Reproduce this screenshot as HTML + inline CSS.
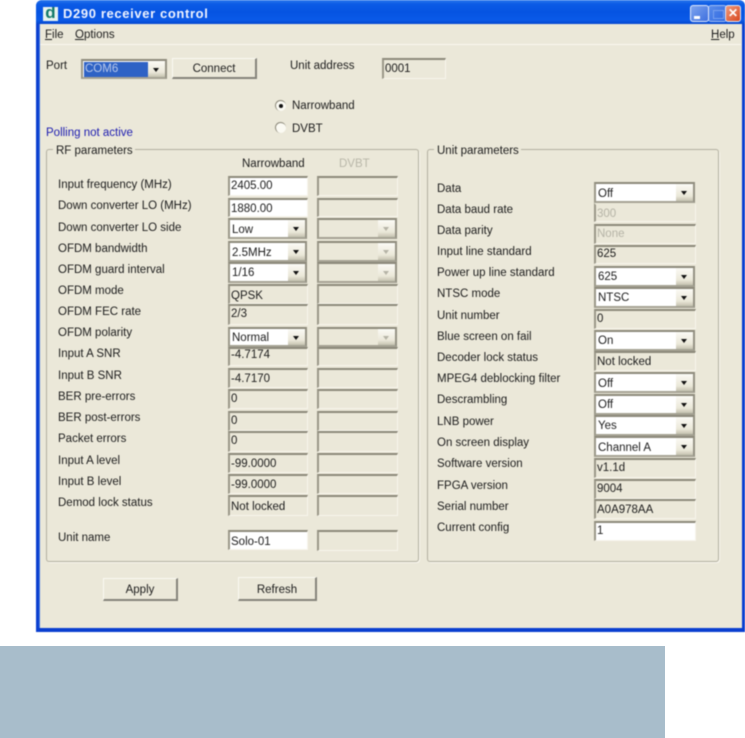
<!DOCTYPE html>
<html><head><meta charset="utf-8"><style>
html,body{margin:0;padding:0;background:#fff;width:745px;height:738px;overflow:hidden}
body{font-family:"Liberation Sans",sans-serif;font-size:11.5px;color:#1c1c1c;position:relative}
#w{position:absolute;left:36px;top:0;width:709px;height:632px;filter:blur(.45px)}
#a{position:absolute;left:0;top:0;width:709px;height:632px;background:#0a3fd0;border-radius:6px 6px 0 0}
#b{position:absolute;left:3px;top:24px;width:702px;height:604px;background:#ebe8d9;border-left:1px solid #3f73e0}
#t{position:absolute;left:0;top:0;width:709px;height:24px;border-radius:6px 6px 0 0;background:linear-gradient(#2a78ec 0,#0c5be6 4px,#0654e2 12px,#0a5ae8 20px,#0546cf 24px)}
.x{position:absolute;white-space:nowrap;line-height:14px;margin-left:-36px;margin-top:1px}
.f,.w,.c,.d{position:absolute;margin-left:-36px;box-sizing:border-box;border-top:2px solid #8c897a;border-left:2px solid #9a9788;border-bottom:1px solid #f7f5ec;border-right:1px solid #f7f5ec;background:#ebe8d9;padding-left:1px;padding-top:1px;line-height:17px;white-space:nowrap;overflow:hidden}
.w,.c{background:#fff}
.c,.d{border-bottom:2px solid #a5a294;border-right:2px solid #949183;padding-left:2px}
.c i,.d i{position:absolute;right:0;top:0;bottom:0;width:17px;background:linear-gradient(#fbfaf5,#ebe8d9 70%,#c5c2b0);}
.c i:after,.d i:after{content:"";position:absolute;left:5px;top:7px;border:3.5px solid transparent;border-top:4px solid #111;border-bottom:0}
.d i:after{border-top-color:#b5b3a6}
.g{position:absolute;margin-left:-36px;box-sizing:border-box;border:1px solid #b2afa0;box-shadow:1px 1px 0 #f8f6ee;border-radius:3px}
.lg{position:absolute;margin-left:-36px;margin-top:1px;background:#ebe8d9;padding:0 2px 0 3px;line-height:14px;white-space:nowrap}
.b{position:absolute;margin-left:-36px;box-sizing:border-box;background:#ebe8d9;border-top:1px solid #fbfaf3;border-left:1px solid #fbfaf3;border-right:2px solid #85837a;border-bottom:2px solid #85837a;text-align:center;line-height:21px}
.m{position:absolute;top:4px;width:19px;height:17px;border-radius:3px;border:1px solid #dfe8fa;box-sizing:border-box;background:linear-gradient(135deg,#7ea4ee,#3f70df)}
.r{position:absolute;margin-left:-36px;width:11px;height:11px;border-radius:50%;background:#fbfaf3;border-top:1px solid #8c897a;border-left:1px solid #8c897a;box-sizing:border-box}
.r b{position:absolute;left:3px;top:3px;width:4px;height:4px;border-radius:50%;background:#111}
u{text-decoration:underline}
</style></head><body>
<div id="w">
<div id="a"></div><div id="b"></div>
<div id="t"></div>
<div style="position:absolute;left:7px;top:7px;width:15px;height:14px;background:#e8f2ee;color:#137a6a;font:bold 17px/12px 'Liberation Sans',sans-serif;text-align:center;overflow:hidden">d</div>
<div style="position:absolute;left:27px;top:6px;color:#f0f4ff;font:bold 13px/16px 'Liberation Sans',sans-serif;letter-spacing:.63px;white-space:nowrap">D290 receiver control</div>
<div class="m" style="left:654px;top:5px"><div style="position:absolute;left:3px;bottom:2px;width:6px;height:3px;background:#fff"></div></div>
<div class="m" style="left:672px;top:5px;opacity:.7"><div style="position:absolute;left:4px;top:4px;width:9px;height:7px;border:1px solid #a9c2f4"></div></div>
<div class="m" style="left:689px;top:5px;width:16px;background:linear-gradient(135deg,#ee9a7c,#d9481e);text-align:center;color:#fff;font:bold 12px/15px 'Liberation Sans',sans-serif">✕</div>
<div style="position:absolute;left:4px;top:44px;width:701px;height:1px;background:#faf8f0"></div>

<div class="x" style="left:45px;top:27px"><u>F</u>ile</div>
<div class="x" style="left:75px;top:27px"><u>O</u>ptions</div>
<div class="x" style="left:711px;top:27px"><u>H</u>elp</div>

<div class="x" style="left:46px;top:58px">Port</div>
<div class="c" style="left:81px;top:59px;width:86px;height:20px;line-height:15px;padding:0"><span style="display:block;margin:1px 0 0 1px;width:65px;height:15px;background:#2e62c5;color:#b8c8ea;padding-left:1px">COM6</span><i></i></div>
<div class="b" style="left:172px;top:58px;width:85px;height:21px">Connect</div>
<div class="x" style="left:290px;top:58px">Unit address</div>
<div class="f" style="left:382px;top:58px;width:64px;height:21px">0001</div>

<div class="r" style="left:275px;top:100px"><b></b></div>
<div class="x" style="left:292px;top:98px">Narrowband</div>
<div class="r" style="left:275px;top:122px"></div>
<div class="x" style="left:292px;top:121px">DVBT</div>
<div class="x" style="left:46px;top:125px;color:#1c1cb0">Polling not active</div>

<div class="g" style="left:46px;top:149px;width:373px;height:413px"></div>
<div class="lg" style="left:53px;top:143px">RF parameters</div>
<div class="g" style="left:427px;top:149px;width:292px;height:413px"></div>
<div class="lg" style="left:434px;top:143px">Unit parameters</div>

<div class="x" style="left:242px;top:156px">Narrowband</div>
<div class="x" style="left:339px;top:156px;color:#b9b7a9">DVBT</div>

<div class="x" style="left:58px;top:177px">Input frequency (MHz)</div>
<div class="x" style="left:58px;top:198px">Down converter LO (MHz)</div>
<div class="x" style="left:58px;top:220px">Down converter LO side</div>
<div class="x" style="left:58px;top:241px">OFDM bandwidth</div>
<div class="x" style="left:58px;top:262px">OFDM guard interval</div>
<div class="x" style="left:58px;top:283px">OFDM mode</div>
<div class="x" style="left:58px;top:304px">OFDM FEC rate</div>
<div class="x" style="left:58px;top:325px">OFDM polarity</div>
<div class="x" style="left:58px;top:346px">Input A SNR</div>
<div class="x" style="left:58px;top:368px">Input B SNR</div>
<div class="x" style="left:58px;top:389px">BER pre-errors</div>
<div class="x" style="left:58px;top:410px">BER post-errors</div>
<div class="x" style="left:58px;top:431px">Packet errors</div>
<div class="x" style="left:58px;top:453px">Input A level</div>
<div class="x" style="left:58px;top:474px">Input B level</div>
<div class="x" style="left:58px;top:495px">Demod lock status</div>
<div class="x" style="left:58px;top:530px">Unit name</div>

<div class="w" style="left:228px;top:176px;width:80px;height:20px;line-height:15px">2405.00</div>
<div class="w" style="left:228px;top:198px;width:80px;height:19px">1880.00</div>
<div class="c" style="left:228px;top:218px;width:79px;height:21px;line-height:19px">Low<i></i></div>
<div class="c" style="left:228px;top:241px;width:79px;height:21px;line-height:19px">2.5MHz<i></i></div>
<div class="c" style="left:228px;top:262px;width:79px;height:21px">1/16<i></i></div>
<div class="f" style="left:228px;top:284px;width:80px;height:20px;line-height:19px">QPSK</div>
<div class="f" style="left:228px;top:304px;width:80px;height:21px;line-height:15px">2/3</div>
<div class="c" style="left:228px;top:327px;width:79px;height:20px">Normal<i></i></div>
<div class="f" style="left:228px;top:347px;width:80px;height:19px;line-height:11px">-4.7174</div>
<div class="f" style="left:228px;top:368px;width:80px;height:20px">-4.7170</div>
<div class="f" style="left:228px;top:389px;width:80px;height:20px;line-height:15px">0</div>
<div class="f" style="left:228px;top:411px;width:80px;height:20px;line-height:15px">0</div>
<div class="f" style="left:228px;top:431px;width:80px;height:21px;line-height:15px">0</div>
<div class="f" style="left:228px;top:453px;width:80px;height:20px">-99.0000</div>
<div class="f" style="left:228px;top:474px;width:80px;height:20px">-99.0000</div>
<div class="f" style="left:228px;top:495px;width:80px;height:21px;line-height:19px">Not locked</div>
<div class="w" style="left:228px;top:530px;width:80px;height:20px;line-height:19px">Solo-01</div>

<div class="f" style="left:317px;top:176px;width:81px;height:20px"></div>
<div class="f" style="left:317px;top:198px;width:81px;height:19px"></div>
<div class="d" style="left:317px;top:218px;width:80px;height:21px"><i></i></div>
<div class="d" style="left:317px;top:241px;width:80px;height:21px"><i></i></div>
<div class="d" style="left:317px;top:262px;width:80px;height:21px"><i></i></div>
<div class="f" style="left:317px;top:284px;width:81px;height:20px"></div>
<div class="f" style="left:317px;top:304px;width:81px;height:21px"></div>
<div class="d" style="left:317px;top:327px;width:80px;height:20px"><i></i></div>
<div class="f" style="left:317px;top:347px;width:81px;height:19px"></div>
<div class="f" style="left:317px;top:368px;width:81px;height:20px"></div>
<div class="f" style="left:317px;top:389px;width:81px;height:20px"></div>
<div class="f" style="left:317px;top:411px;width:81px;height:20px"></div>
<div class="f" style="left:317px;top:431px;width:81px;height:21px"></div>
<div class="f" style="left:317px;top:453px;width:81px;height:20px"></div>
<div class="f" style="left:317px;top:474px;width:81px;height:20px"></div>
<div class="f" style="left:317px;top:495px;width:81px;height:21px"></div>
<div class="f" style="left:317px;top:530px;width:81px;height:21px"></div>

<div class="x" style="left:437px;top:181px">Data</div>
<div class="x" style="left:437px;top:202px">Data baud rate</div>
<div class="x" style="left:437px;top:223px">Data parity</div>
<div class="x" style="left:437px;top:244px">Input line standard</div>
<div class="x" style="left:437px;top:265px">Power up line standard</div>
<div class="x" style="left:437px;top:286px">NTSC mode</div>
<div class="x" style="left:437px;top:308px">Unit number</div>
<div class="x" style="left:437px;top:329px">Blue screen on fail</div>
<div class="x" style="left:437px;top:350px">Decoder lock status</div>
<div class="x" style="left:437px;top:371px">MPEG4 deblocking filter</div>
<div class="x" style="left:437px;top:392px">Descrambling</div>
<div class="x" style="left:437px;top:414px">LNB power</div>
<div class="x" style="left:437px;top:435px">On screen display</div>
<div class="x" style="left:437px;top:456px">Software version</div>
<div class="x" style="left:437px;top:478px">FPGA version</div>
<div class="x" style="left:437px;top:499px">Serial number</div>
<div class="x" style="left:437px;top:520px">Current config</div>

<div class="c" style="left:594px;top:182px;width:101px;height:21px;line-height:19px">Off<i></i></div>
<div class="f" style="left:594px;top:203px;width:102px;height:19px;color:#b5b3a6;border-top-color:#ebe8d9">300</div>
<div class="f" style="left:594px;top:224px;width:102px;height:20px;color:#b5b3a6;line-height:15px">None</div>
<div class="f" style="left:594px;top:245px;width:102px;height:19px;line-height:13px">625</div>
<div class="c" style="left:594px;top:266px;width:101px;height:21px">625<i></i></div>
<div class="c" style="left:594px;top:287px;width:101px;height:21px">NTSC<i></i></div>
<div class="f" style="left:594px;top:309px;width:102px;height:20px;line-height:15px">0</div>
<div class="c" style="left:594px;top:330px;width:101px;height:21px">On<i></i></div>
<div class="f" style="left:594px;top:351px;width:102px;height:20px">Not locked</div>
<div class="c" style="left:594px;top:372px;width:101px;height:21px;line-height:19px">Off<i></i></div>
<div class="c" style="left:594px;top:394px;width:101px;height:21px">Off<i></i></div>
<div class="c" style="left:594px;top:415px;width:101px;height:21px">Yes<i></i></div>
<div class="c" style="left:594px;top:436px;width:101px;height:21px;line-height:19px">Channel A<i></i></div>
<div class="f" style="left:594px;top:458px;width:102px;height:20px;line-height:15px">v1.1d</div>
<div class="f" style="left:594px;top:479px;width:102px;height:20px;line-height:15px">9004</div>
<div class="f" style="left:594px;top:499px;width:102px;height:20px">A0A978AA</div>
<div class="w" style="left:594px;top:521px;width:102px;height:20px;line-height:15px">1</div>

<div class="b" style="left:103px;top:578px;width:75px;height:23px;line-height:22px">Apply</div>
<div class="b" style="left:238px;top:577px;width:79px;height:24px;line-height:25px">Refresh</div>
</div>
<div style="position:absolute;left:0;top:646px;width:665px;height:92px;background:#a8bdcb"></div>
</body></html>
